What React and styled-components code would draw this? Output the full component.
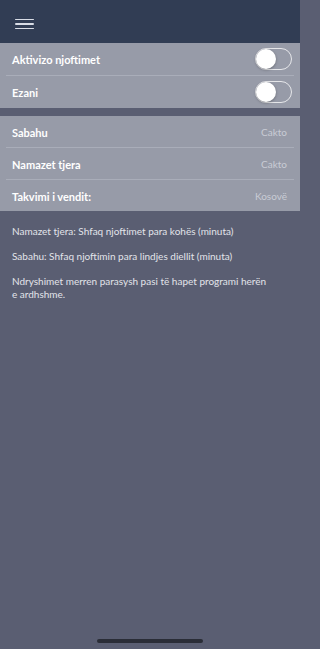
import React from 'react';
import styled, { createGlobalStyle } from 'styled-components'

const GlobalStyle = createGlobalStyle`
  html, body {
    margin: 0;
    padding: 0;
    background: #5a5e72;
  }
  body {
    font-family: Lato, "Open Sans", sans-serif;
    -webkit-font-smoothing: antialiased;
  }
`;

const App = () => {
  return (
    <Page>
      <GlobalStyle />
      <Header>
        <Burger>
          <span />
          <span />
          <span />
        </Burger>
      </Header>

      <Group>
        <Row>
          <Label>Aktivizo njoftimet</Label>
          <Toggle />
        </Row>
        <Divider />
        <Row>
          <Label>Ezani</Label>
          <Toggle />
        </Row>
      </Group>

      <Group $gap>
        <Row $short>
          <Label>Sabahu</Label>
          <Value>Cakto</Value>
        </Row>
        <Divider />
        <Row $short>
          <Label>Namazet tjera</Label>
          <Value>Cakto</Value>
        </Row>
        <Divider />
        <Row $short>
          <Label>Takvimi i vendit:</Label>
          <Value>Kosovë</Value>
        </Row>
      </Group>

      <Notes>
        <p>Namazet tjera: Shfaq njoftimet para kohës (minuta)</p>
        <p>Sabahu: Shfaq njoftimin para lindjes diellit (minuta)</p>
        <p>Ndryshimet merren parasysh pasi të hapet programi herën e ardhshme.</p>
      </Notes>

      <HomeBar />
    </Page>
  )
}

const Page = styled.div`
  position: relative;
  width: 300px;
  min-height: 649px;
  overflow: hidden;
  background: #5a5e72;
`;

const Header = styled.header`
  height: 43px;
  background: #313d54;
  display: flex;
  align-items: center;
  padding-left: 15px;
  box-sizing: border-box;
`;

const Burger = styled.div`
  width: 19px;
  display: flex;
  flex-direction: column;
  gap: 3px;
  margin-top: 5px;

  span {
    display: block;
    height: 1.5px;
    background: #d9dde6;
    border-radius: 1px;
  }
`;

const Group = styled.section`
  background: #979ba8;
  margin-top: ${props => (props.$gap ? '8px' : '0')};
`;

const Row = styled.div`
  height: ${props => (props.$short ? '31px' : '32px')};
  display: flex;
  align-items: center;
  justify-content: space-between;
  padding: 0 8px 0 12px;
`;

const Divider = styled.div`
  height: 1px;
  margin: 0 6px;
  background: #a9adb9;
`;

const Label = styled.span`
  color: #ffffff;
  font-size: 11px;
  font-weight: 700;
  padding-top: 1px;
`;

const Value = styled.span`
  color: #c9ccd5;
  font-size: 10px;
  padding-right: 5px;
`;

const Toggle = styled.div`
  position: relative;
  width: 37px;
  height: 22px;
  box-sizing: border-box;
  border: 1px solid rgba(255, 255, 255, 0.75);
  border-radius: 11px;

  &::after {
    content: '';
    position: absolute;
    top: 0;
    left: 0;
    width: 20px;
    height: 20px;
    border-radius: 50%;
    background: #ffffff;
    box-shadow: 0 1px 3px rgba(0, 0, 0, 0.3);
  }
`;

const Notes = styled.div`
  padding: 14px 30px 0 12px;

  p {
    margin: 0 0 12px 0;
    color: #e2e4ea;
    font-size: 10px;
    line-height: 13px;
  }
`;

const HomeBar = styled.div`
  position: absolute;
  left: 97px;
  top: 639px;
  width: 106px;
  height: 4px;
  border-radius: 2px;
  background: #2a2d37;
`;

export default App
